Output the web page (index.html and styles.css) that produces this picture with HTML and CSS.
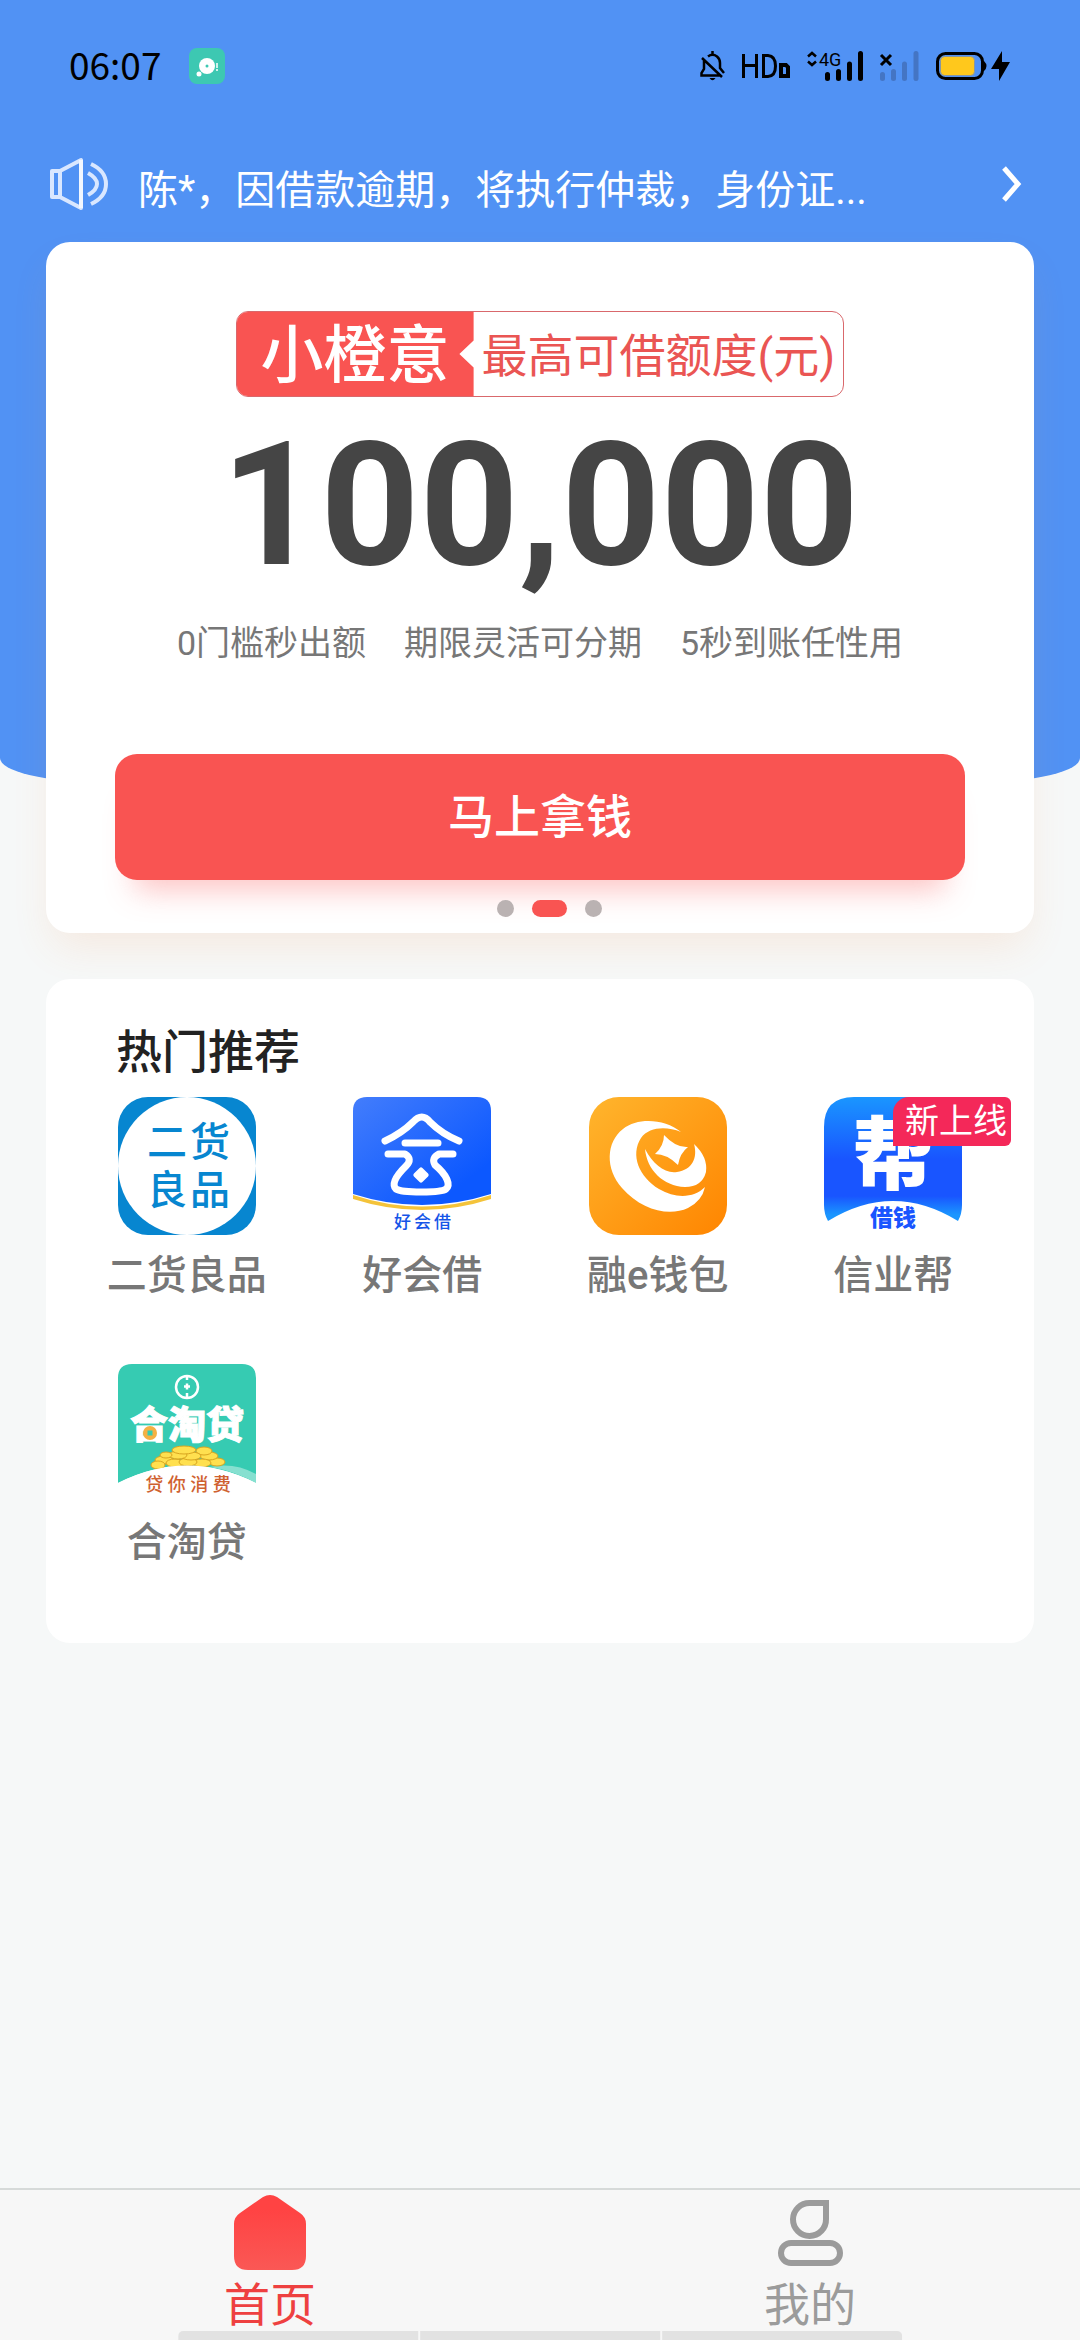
FILE: index.html
```html
<!DOCTYPE html>
<html lang="zh-CN">
<head>
<meta charset="UTF-8">
<meta name="viewport" content="width=device-width, initial-scale=1">
<title>小橙意</title>
<link rel="stylesheet" href="styles.css">
</head>
<body>
<div class="page">

  <header class="status">
    <span class="time">06:07</span>
    <svg class="app" width="36" height="36" viewBox="0 0 36 36">
      <rect width="36" height="36" rx="8" fill="#3dc8b2"/>
      <circle cx="18" cy="18" r="8" fill="#fff"/>
      <circle cx="18" cy="18" r="1.5" fill="#3dc8b2"/>
      <circle cx="10" cy="26" r="2.5" fill="#fff"/>
      <path d="M28 15v5M28 21v2" stroke="#fff" stroke-width="1.5"/>
    </svg>
    <div class="status-icons">
      <svg width="25" height="30" viewBox="0 0 25 30" fill="none" stroke="#000" stroke-width="2.5">
        <path d="M12.500 0v4M8 5.500Q12.500 2 17 5.500Q20 8 20 12V17L24 22M4 9V18L1.500 22V24.500H21M2 7L22 26"/>
        <path d="M9.500 27H15.500Q12.500 31.500 9.500 27" fill="#000" stroke="none"/>
      </svg>
      <svg width="48" height="30" viewBox="0 0 48 30" fill="none" stroke="#000" stroke-width="3">
        <path d="M1.500 3V27M14.500 3V27M1.500 14.500H14.500M21.500 4.500V25.500H26Q33.500 25 33.500 15T26 4.500Z"/>
        <path d="M39 14H44L46 16V25H39Z" stroke-width="4"/>
      </svg>
      <svg width="56" height="30" viewBox="0 0 56 30">
        <path d="M1 5.500L5 2L9 5.500M1 10.500L5 14L9 10.500" fill="none" stroke="#000" stroke-width="2.500"/>
        <text x="12" y="15" class="net">4G</text>
        <path d="M20.500 23.500V27.500M31.500 20.500V27.500M42.500 13V27.500M53.500 2.500V27.500" stroke="#000" stroke-width="5" stroke-linecap="round"/>
      </svg>
      <svg width="39" height="30" viewBox="0 0 39 30">
        <path d="M1 4L11 14M11 4L1 14" stroke="#000" stroke-width="3"/>
        <path d="M2.500 23.500V27.500M13.500 20.500V27.500M24.500 13V27.500M36 2.500V27.500" stroke="#4475c4" stroke-width="5" stroke-linecap="round"/>
      </svg>
      <svg width="74" height="30" viewBox="0 0 74 30">
        <rect x="1.500" y="2.500" width="45" height="25" rx="8" fill="none" stroke="#000" stroke-width="3"/>
        <path d="M48 10Q53 15 48 20Z"/>
        <rect x="4.500" y="5.500" width="34" height="19" rx="4" fill="#ffc81c" stroke="#8896a0" stroke-width="1"/>
        <path d="M66 0L55 18H63V30L74 11H66Z"/>
      </svg>
    </div>
  </header>

  <a class="notice" href="#">
    <svg width="58" height="52" viewBox="0 0 58 52" fill="none" stroke="#d9e7ff" stroke-width="4" stroke-linejoin="round">
      <path d="M2 13H10V39H2ZM10 13L31 2V50L10 39M38 15Q47 20 47 26T38 37"/>
      <path d="M41 6Q56 13 56 26T41 46"/>
      <path d="M31 2V50" stroke="#f2f7ff"/>
    </svg>
    <span class="notice-text">陈*，因借款逾期，将执行仲裁，身份证...</span>
    <svg class="arrow" width="20" height="38" viewBox="0 0 20 38" fill="none" stroke="#fff" stroke-width="5">
      <path d="M2 3L16 19L2 35"/>
    </svg>
  </a>

  <main>
    <section class="card loan">
      <div class="tag">
        <strong>小橙意</strong>
        <span>最高可借额度(元)</span>
      </div>
      <div class="amount">100,000</div>
      <ul class="points">
        <li>0门槛秒出额</li>
        <li>期限灵活可分期</li>
        <li>5秒到账任性用</li>
      </ul>
      <button class="apply" type="button">马上拿钱</button>
      <div class="dots"><i></i><i class="on"></i><i></i></div>
    </section>

    <section class="card hot">
      <h2>热门推荐</h2>
      <div class="grid">
        <a class="item" href="#">
          <svg class="logo" viewBox="0 0 138 138">
            <rect width="138" height="138" rx="30" fill="#0786d0"/>
            <circle cx="69" cy="69" r="69" fill="#fff"/>
            <text class="lg-shop" x="29" y="59">二</text><text class="lg-shop" x="72" y="59">货</text>
            <text class="lg-shop" x="29" y="107">良</text><text class="lg-shop" x="72" y="107">品</text>
          </svg>
          <span>二货良品</span>
        </a>
        <a class="item" href="#">
          <svg class="logo" viewBox="0 0 138 138">
            <defs>
              <linearGradient id="blue" x1="0" y1="0" x2="1" y2="1"><stop offset="0" stop-color="#437dfc"/><stop offset=".8" stop-color="#0c58ff"/></linearGradient>
            </defs>
            <path d="M0 98Q69 121 138 98V102Q69 124 0 102Z" fill="#f4c33a"/>
            <path d="M14 0H124Q138 0 138 14V97Q69 119 0 97V14Q0 0 14 0Z" fill="url(#blue)"/>
            <g fill="none" stroke="#fff" stroke-width="7" stroke-linecap="round" stroke-linejoin="round">
              <path d="M32 44Q49 36 60 25Q69 15 77 25Q89 37 106 44M52 46H85M35 57H52Q60 62 53 69C41 81 39 88 43 92C49 96 88 96 93 92C98 88 94 78 82 68Q78 61 86 57H100"/>
            </g>
            <rect x="62" y="72" width="12" height="12" rx="2" transform="rotate(45 68 78)" fill="#fff"/>
            <text class="lg-hui" x="41" y="131">好</text><text class="lg-hui" x="61" y="131">会</text><text class="lg-hui" x="81" y="131">借</text>
          </svg>
          <span>好会借</span>
        </a>
        <a class="item" href="#">
          <svg class="logo" viewBox="0 0 138 138">
            <defs>
              <linearGradient id="orange" x1="0" y1="0" x2="1" y2="1"><stop offset="0" stop-color="#ffb52d"/><stop offset="1" stop-color="#ff8500"/></linearGradient>
            </defs>
            <rect width="138" height="138" rx="30" fill="url(#orange)"/>
            <g fill="#fff">
              <path d="M92 35C76 22 49 20 34 32C17 45 16 72 33 91C52 113 80 120 99 111Q113 104 116 90C105 101 87 102 70 92C50 80 41 58 52 41C60 30 77 29 92 35Z"/>
              <path d="M56 52C58 73 74 89 96 90Q113 90 117 75Q119 60 105 47C109 61 103 73 88 75C76 77 64 67 56 52Z"/>
              <path d="M75 38Q87 51 99 50Q91 56 89 68Q78 57 66 57Q75 49 75 38Z"/>
            </g>
          </svg>
          <span>融e钱包</span>
        </a>
        <a class="item" href="#">
          <em class="badge">新上线</em>
          <svg class="logo" viewBox="0 0 138 138">
            <defs>
              <linearGradient id="sky" x1="0" y1="0" x2="0" y2="1"><stop offset="0" stop-color="#1a96ff"/><stop offset=".5" stop-color="#1955ff"/><stop offset=".8" stop-color="#1955ff"/><stop offset=".95" stop-color="#1a96ff"/></linearGradient>
            </defs>
            <path d="M30 0H108Q138 0 138 30V108Q138 117 134 124Q69 84 4 124Q0 117 0 108V30Q0 0 30 0Z" fill="url(#sky)"/>
            <text class="lg-bang" x="69" y="86" text-anchor="middle">帮</text>
            <text class="lg-jie" x="69" y="129" text-anchor="middle">借钱</text>
          </svg>
          <span>信业帮</span>
        </a>
        <a class="item" href="#">
          <svg class="logo" viewBox="0 0 138 138">
            <path d="M14 0H124Q138 0 138 14V119Q69 84 0 119V14Q0 0 14 0Z" fill="#36cbb2"/>
            <path d="M92 103Q116 98 138 110V119Q116 107 92 103Z" fill="#86e0d0"/>
            <circle cx="69" cy="23" r="11" fill="none" stroke="#fff" stroke-width="2.500"/>
            <path d="M69 11V16M69 29V35M66 22.500H72M69 19.500V25.500" stroke="#fff" stroke-width="2.500"/>
            <text class="lg-tao" x="69" y="74" text-anchor="middle">合淘贷</text>
            <circle cx="32" cy="69" r="7" fill="#f5b042"/>
            <rect x="29.500" y="66.500" width="5" height="5" fill="#36cbb2"/>
            <g fill="#ffe04f" stroke="#d9a520" stroke-width="1">
              <ellipse cx="46" cy="96" rx="9" ry="4"/><ellipse cx="40" cy="101" rx="7" ry="4"/>
              <ellipse cx="99" cy="98" rx="8" ry="4"/><ellipse cx="91" cy="92" rx="9" ry="4"/>
              <ellipse cx="86" cy="87" rx="8" ry="4"/><ellipse cx="57" cy="99" rx="9" ry="4"/>
              <ellipse cx="84" cy="99" rx="9" ry="4"/><ellipse cx="70" cy="98" rx="9" ry="4"/>
              <ellipse cx="73" cy="92" rx="10" ry="4"/><ellipse cx="60" cy="91" rx="9" ry="4"/>
              <ellipse cx="66" cy="86" rx="12" ry="4"/><ellipse cx="48" cy="91" rx="6" ry="3"/>
            </g>
            <path d="M0 119Q69 84 138 119V138H0Z" fill="#fff"/>
            <text class="lg-fee" x="70" y="127" text-anchor="middle">贷 你 消 费</text>
          </svg>
          <span>合淘贷</span>
        </a>
      </div>
    </section>
  </main>

  <nav class="tabbar">
    <a class="tab active" href="#">
      <svg width="72" height="75" viewBox="0 0 72 75">
        <defs>
          <linearGradient id="red" x1="0" y1="0" x2="0" y2="1"><stop offset=".2" stop-color="#ff4343"/><stop offset="1" stop-color="#fa5855"/></linearGradient>
        </defs>
        <path d="M29 2Q36 -2 43 2L66 18Q72 22 72 29V61Q72 75 58 75H14Q0 75 0 61V29Q0 22 6 18Z" fill="url(#red)"/>
      </svg>
      <span>首页</span>
    </a>
    <a class="tab" href="#">
      <svg width="72" height="75" viewBox="0 0 72 75" fill="none" stroke="#9b9b9b" stroke-width="6">
        <path d="M36 8H52V24A16.500 16.500 0 1 1 36 8Z"/>
        <rect x="7" y="48" width="59" height="20" rx="10"/>
      </svg>
      <span>我的</span>
    </a>
    <div class="gesture"><i></i><i></i><i></i></div>
  </nav>

</div>
</body>
</html>
```
FILE: styles.css
```css
* {
  box-sizing: border-box;
}
body {
  margin: 0;
  background: #f6f8f8;
  font-family: Roboto, "Noto Sans CJK SC", sans-serif;
}
a {
  color: inherit;
  text-decoration: none;
}
svg {
  display: block;
  flex: none;
  overflow: visible;
}
.page {
  position: relative;
  z-index: 0;
  display: flex;
  flex-direction: column;
  min-height: 100vh;
}
/* blue backdrop behind the notice and the loan card */
.page::before {
  content: "";
  position: absolute;
  z-index: -1;
  top: 0;
  left: 0;
  right: 0;
  height: 782px;
  background: #5192f4;
  border-radius: 0 0 100px 100px / 0 0 24px 24px;
}

/* status bar */
.status {
  display: flex;
  align-items: center;
  height: 132px;
  padding: 0 70px 0 69px;
}
.time {
  padding-bottom: 4px;
  font-family: "Noto Sans CJK SC", sans-serif;
  font-size: 37px;
  line-height: 40px;
}
.app {
  margin-left: 28px;
}
.status-icons {
  display: flex;
  gap: 17px;
  margin-left: auto;
}
.net {
  font-size: 18px;
}

/* notice */
.notice {
  display: flex;
  align-items: center;
  height: 110px;
  padding: 0 58px 6px 50px;
  color: #fff;
}
.notice-text {
  flex: 1;
  padding-top: 14px;
  margin-left: 30px;
  font-size: 40px;
  line-height: 60px;
  white-space: nowrap;
}

.card {
  margin: 0 46px 46px;
  border-radius: 24px;
  background: #fff;
}

/* loan card */
.loan {
  display: flex;
  flex-direction: column;
  align-items: center;
  padding: 69px 69px 16px;
  box-shadow: 0 20px 40px -6px rgba(250, 130, 60, .12);
}
.tag {
  display: flex;
  height: 86px;
  border: 1px solid #d9686c;
  border-radius: 12px;
  overflow: hidden;
  color: #ea5553;
  line-height: 88px;
}
.tag strong {
  width: 237px;
  padding-left: 24px;
  background: #f95452;
  clip-path: polygon(0 0, 100% 0, 100% 34%, 94% 50%, 100% 66%, 100% 100%, 0 100%);
  color: #fff;
  font-size: 63px;
  font-weight: 500;
}
.tag span {
  padding: 0 8px;
  font-size: 46px;
}
.amount {
  margin-top: 7px;
  color: #454545;
  font-size: 173px;
  font-weight: 700;
  line-height: 203px;
}
.points {
  display: flex;
  gap: 38px;
  margin: 11px 0 0;
  padding: 0;
  color: #777;
  font-size: 34px;
  line-height: 50px;
  list-style: none;
}
.apply {
  width: 100%;
  height: 126px;
  margin-top: 86px;
  border: 0;
  border-radius: 22px;
  background: #f95452;
  box-shadow: 0 30px 30px -20px rgba(249, 84, 82, .35);
  color: #fff;
  font: 500 46px/60px Roboto, "Noto Sans CJK SC", sans-serif;
}
.dots {
  display: flex;
  margin-top: 20px;
  padding-left: 18px;
}
.dots i {
  width: 17px;
  height: 17px;
  margin-right: 18px;
  border-radius: 9px;
  background: #bab2b2;
}
.dots i:last-child {
  margin-right: 0;
}
.dots .on {
  width: 35px;
  background: #f95452;
}

/* recommended apps */
.hot {
  padding: 40px 23px 70px;
}
.hot h2 {
  margin: 0 0 12px 47px;
  color: #222;
  font-size: 46px;
  font-weight: 500;
  line-height: 66px;
}
.grid {
  display: grid;
  grid-template-columns: repeat(4, 1fr);
  row-gap: 58px;
}
.item {
  position: relative;
  display: flex;
  flex-direction: column;
  align-items: center;
  color: #777;
  font-size: 40px;
  font-weight: 500;
  line-height: 60px;
}
.item span {
  margin-top: 11px;
}
.logo {
  width: 138px;
  height: 138px;
}
.badge {
  position: absolute;
  top: 0;
  right: 0;
  padding: 0 4px 0 12px;
  border-radius: 16px 6px 6px 0;
  background: #f42859;
  color: #fff;
  font-size: 34px;
  font-style: normal;
  font-weight: 400;
  line-height: 49px;
}
.lg-shop {
  fill: #0786d0;
  font-size: 40px;
}
.lg-hui {
  fill: #1555e8;
  font-size: 17px;
}
.lg-bang {
  fill: #fff;
  font-size: 80px;
  font-weight: 900;
}
.lg-jie {
  fill: #1955ff;
  font-size: 23px;
  font-weight: 900;
}
.lg-tao {
  fill: #fff;
  stroke: #fff;
  stroke-width: 1px;
  font-size: 38px;
  font-weight: 900;
}
.lg-fee {
  fill: #cf6130;
  font-size: 18px;
}

/* bottom tabs */
.tabbar {
  position: relative;
  display: flex;
  height: 152px;
  margin-top: auto;
  border-top: 2px solid #d6dad9;
  background: #f7f7f7;
}
.tab {
  flex: 1;
  display: flex;
  flex-direction: column;
  align-items: center;
  padding-top: 5px;
  color: #9b9b9b;
  font-size: 46px;
  line-height: 70px;
}
.tab.active {
  color: #ee4040;
}
.gesture {
  position: absolute;
  left: 50%;
  bottom: 0;
  display: flex;
  gap: 2px;
  width: 67%;
  height: 9px;
  border-radius: 5px 5px 0 0;
  overflow: hidden;
  transform: translateX(-50%);
}
.gesture i {
  flex: 1;
  background: #e2e2e2;
}
```
